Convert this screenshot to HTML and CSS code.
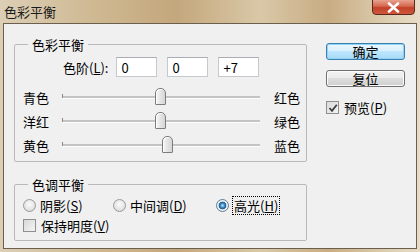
FILE: index.html
```html
<!DOCTYPE html>
<html lang="zh-CN">
<head>
    <meta charset="UTF-8">
    <meta name="viewport" content="width=device-width, initial-scale=1.0">
    <title>色彩平衡</title>
    <link rel="stylesheet" href="styles.css">
</head>
<body>

    <div class="window">
        <div class="titlebar">
            <span class="title">色彩平衡</span>
            <button class="close" aria-label="关闭">
                <svg width="13" height="11" viewBox="0 0 13 11">
                    <path d="M2 1.5 L11 9.5 M11 1.5 L2 9.5" stroke="#fff" stroke-width="2.6" stroke-linecap="round"/>
                </svg>
            </button>
        </div>

        <div class="client">
            <div class="main">
                <!-- color balance sliders -->
                <fieldset class="group balance">
                    <legend>色彩平衡</legend>
                    <div class="levels">
                        <label>色阶(<u>L</u>):</label>
                        <input class="field" value="0">
                        <input class="field" value="0">
                        <input class="field" value="+7">
                    </div>
                    <div class="slider-row">
                        <span class="lbl-left">青色</span>
                        <div class="track"><span class="tick"></span><span class="thumb" style="left: 50%"></span></div>
                        <span class="lbl-right">红色</span>
                    </div>
                    <div class="slider-row">
                        <span class="lbl-left">洋红</span>
                        <div class="track"><span class="tick"></span><span class="thumb" style="left: 50%"></span></div>
                        <span class="lbl-right">绿色</span>
                    </div>
                    <div class="slider-row">
                        <span class="lbl-left">黄色</span>
                        <div class="track"><span class="tick"></span><span class="thumb" style="left: 53.5%"></span></div>
                        <span class="lbl-right">蓝色</span>
                    </div>
                </fieldset>

                <!-- tone balance -->
                <fieldset class="group tone">
                    <legend>色调平衡</legend>
                    <div class="radios">
                        <label class="opt opt-1"><span class="radio"></span>阴影(<u>S</u>)</label>
                        <label class="opt opt-2"><span class="radio"></span>中间调(<u>D</u>)</label>
                        <label class="opt"><span class="radio on"></span><span class="focus">高光(<u>H</u>)</span></label>
                    </div>
                    <label class="opt keep"><span class="check"></span>保持明度(<u>V</u>)</label>
                </fieldset>
            </div>

            <div class="side">
                <button class="btn default">确定</button>
                <button class="btn">复位</button>
                <label class="opt preview">
                    <span class="check on">
                        <svg width="10" height="10" viewBox="0 0 10 10">
                            <path d="M1.5 5 L4 7.8 L8.8 1.8" fill="none" stroke="#3d3d3d" stroke-width="1.8"/>
                        </svg>
                    </span>预览(<u>P</u>)
                </label>
            </div>
        </div>
    </div>

</body>
</html>
```

FILE: styles.css
```css
body {
    margin: 0;
    padding: 0;
    font-family: "Noto Sans CJK SC", "DejaVu Sans", sans-serif;
    font-size: 13px;
    color: #000;
    background-color: #e9dfca;
}
.window {
    width: 420px;
    height: 252px;
    display: flex;
    flex-direction: column;
    background: linear-gradient(90deg, #dccfb6 0%, #cfb993 22%, #c4a77c 42%, #d9c8a7 62%, #c8ac83 78%, #dccdaf 92%, #e8ddc8 100%);
    box-sizing: border-box;
}
.titlebar {
    height: 23px;
    display: flex;
    align-items: flex-start;
}
.title {
    margin: 3px 0 0 4px;
    line-height: 17px;
    color: #1b1b1b;
}
.close {
    margin: -1px 5px 0 auto;
    width: 43px;
    height: 16px;
    padding: 0;
    border: 1px solid #5a2a20;
    border-radius: 0 0 4px 4px;
    background: linear-gradient(#e8a28f 0%, #d5664c 45%, #c2412a 55%, #d0583b 100%);
    display: flex;
    align-items: center;
    justify-content: center;
}
.client {
    flex: 1;
    margin: 0 3px 3px 3px;
    border: 1px solid #6a604d;
    background-color: #f0f0f0;
    display: flex;
    padding: 12px 0 0 10px;
}
.main {
    width: 293px;
}
.group {
    margin: 0;
    padding: 0;
    border: 1px solid #b9b9b9;
    border-radius: 2px;
}
.group legend {
    margin-left: 13px;
    padding: 0 4px;
    line-height: 17px;
}
.levels {
    display: flex;
    align-items: center;
    margin: 4px 0 0 48px;
    height: 20px;
}
.levels label {
    line-height: 17px;
    margin-right: 8px;
}
.field {
    width: 41px;
    height: 20px;
    box-sizing: border-box;
    margin: 0 10px 0 0;
    padding: 0 0 0 4px;
    border: 1px solid #c5c8cc;
    border-top-color: #abadb3;
    background: #fff;
    font-family: "Noto Sans CJK SC", "DejaVu Sans", sans-serif;
    font-size: 13px;
    color: #000;
}
.slider-row {
    display: flex;
    align-items: center;
    height: 24px;
    padding-left: 8px;
}
.levels + .slider-row {
    margin-top: 8px;
}
.lbl-left {
    width: 39px;
    line-height: 17px;
}
.lbl-right {
    margin-left: 14px;
    line-height: 17px;
}
.track {
    position: relative;
    width: 198px;
    height: 2px;
    background: #c4c4c4;
    border-bottom: 1px solid #fdfdfd;
}
.tick {
    position: absolute;
    left: 0;
    top: -2px;
    width: 1px;
    height: 4px;
    background: #8a8a8a;
}
.thumb {
    position: absolute;
    top: -8px;
    width: 11px;
    height: 17px;
    margin-left: -6px;
    box-sizing: border-box;
    border: 1px solid #7c7c7c;
    border-radius: 5px 5px 1px 1px;
    background: linear-gradient(90deg, #f7f7f7 0%, #e4e4e4 50%, #d6d6d6 100%);
    box-shadow: inset 1px 1px 0 #fff;
}
.balance {
    padding-bottom: 4px;
}
.tone {
    margin-top: 14px;
    padding-bottom: 5px;
}
.radios {
    display: flex;
    height: 19px;
    align-items: center;
    margin-top: 3px;
}
.opt {
    display: flex;
    align-items: center;
    padding-left: 8px;
    height: 19px;
    line-height: 17px;
}
.keep {
    margin-top: 1px;
}
.opt-1 {
    width: 82px;
}
.opt-2 {
    width: 95px;
}
.radio {
    width: 11px;
    height: 11px;
    border: 1px solid #9a9a9a;
    border-radius: 50%;
    background: radial-gradient(circle at 50% 40%, #fbfbfb 0%, #e6e6e6 55%, #cfcfcf 100%);
    margin-right: 4px;
}
.radio.on {
    border-color: #5e7c94;
    background: radial-gradient(circle, #bfe6fb 0, #3f8fca 2px, #1d5a8a 3.5px, #e9eef2 4.2px, #f6f6f6 100%);
}
.focus {
    outline: 1px dotted #000;
    outline-offset: 0;
    padding: 0 1px;
}
.check {
    width: 11px;
    height: 11px;
    border: 1px solid #8e8f8f;
    background: linear-gradient(135deg, #d9d9d9 0%, #f4f4f4 100%);
    margin-right: 5px;
    display: flex;
    align-items: center;
    justify-content: center;
}
.side {
    margin: 7px 0 0 19px;
    width: 79px;
}
.btn {
    display: block;
    width: 79px;
    height: 17px;
    margin-bottom: 10px;
    padding: 0;
    border: 1px solid #707070;
    border-radius: 3px;
    background: linear-gradient(#f2f2f2 0%, #ebebeb 50%, #dddddd 50%, #cfcfcf 100%);
    box-shadow: inset 0 0 0 1px #fbfbfb;
    font-family: "Noto Sans CJK SC", "DejaVu Sans", sans-serif;
    font-size: 13px;
    line-height: 14px;
    color: #000;
}
.btn.default {
    border-color: #3c7fb1;
    background: linear-gradient(#eaf6fd 0%, #d9f0fc 50%, #bee6fd 50%, #a7d9f5 100%);
    box-shadow: inset 0 0 0 1px #8fd3f5;
}
.preview {
    padding-left: 0;
    margin-top: 11px;
}
```
